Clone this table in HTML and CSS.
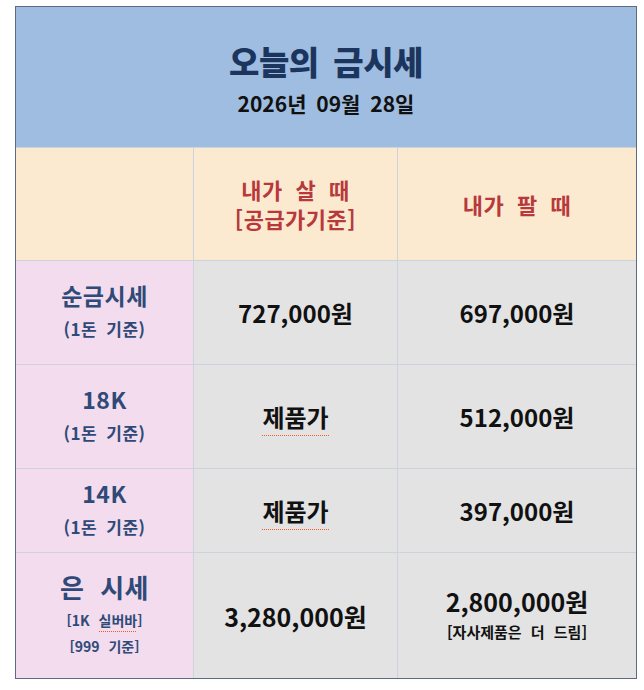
FILE: index.html
```html
<!DOCTYPE html>
<html lang="ko">
<head>
<meta charset="utf-8">
<link rel="stylesheet" href="styles.css">
</head>
<body>
<div class="sheet">
  <div class="cell head">
    <div class="title">오늘의 금시세</div>
    <div class="date">2026년 09월 28일</div>
  </div>

  <div class="cell colhead"></div>
  <div class="cell colhead"><div class="red">내가 살 때</div><div class="red">[공급가기준]</div></div>
  <div class="cell colhead"><div class="red">내가 팔 때</div></div>

  <div class="cell label"><div class="lbl">순금시세</div><div class="sub">(1돈 기준)</div></div>
  <div class="cell val"><div class="num">727,000원</div></div>
  <div class="cell val"><div class="num">697,000원</div></div>

  <div class="cell label"><div class="lbl">18K</div><div class="sub">(1돈 기준)</div></div>
  <div class="cell val"><div class="num"><span class="squiggle">제품가</span></div></div>
  <div class="cell val"><div class="num">512,000원</div></div>

  <div class="cell label"><div class="lbl">14K</div><div class="sub">(1돈 기준)</div></div>
  <div class="cell val"><div class="num"><span class="squiggle">제품가</span></div></div>
  <div class="cell val"><div class="num">397,000원</div></div>

  <div class="cell label"><div class="lbl big">은 시세</div><div class="small">[1K <span class="squiggle">실버바</span>]</div><div class="small">[999 기준]</div></div>
  <div class="cell val"><div class="num big">3,280,000원</div></div>
  <div class="cell val"><div class="num big">2,800,000원</div><div class="note">[자사제품은 더 드림]</div></div>
</div>
</body>
</html>
```

FILE: styles.css
```css
html, body {
  margin: 0;
  padding: 0;
  background: #ffffff;
}
body {
  font-family: "Noto Sans CJK KR", "Noto Sans", sans-serif;
}
.sheet {
  margin: 6px 0 0 15px;
  width: 620px;
  border: 1px solid #5d6b80;
  display: grid;
  grid-template-columns: 177px 203px 238px;
  grid-template-rows: 140px 112px 103px 103px 83px 125px;
  gap: 1px;
  background: #cdd3dc;
}
.cell {
  display: flex;
  flex-direction: column;
  align-items: center;
  justify-content: center;
  text-align: center;
}
.head {
  grid-column: 1 / 4;
  background: #9fbde0;
  padding-top: 4px;
}
.title {
  font-size: 33px;
  font-weight: 900;
  color: #1c355e;
  letter-spacing: -0.5px;
  word-spacing: 6px;
  line-height: 42px;
}
.date {
  font-size: 21px;
  font-weight: 700;
  color: #111111;
  line-height: 30px;
  margin-top: 6px;
  word-spacing: 4px;
}
.colhead {
  background: #fcead0;
}
.red {
  color: #b8393b;
  font-size: 22px;
  font-weight: 700;
  line-height: 29px;
  letter-spacing: 0.5px;
  word-spacing: 6px;
}
.label {
  background: #f2dcee;
  color: #2f4a78;
}
.lbl {
  font-size: 23px;
  font-weight: 700;
  line-height: 34px;
  letter-spacing: 0.5px;
  margin-bottom: 3px;
  margin-top: -4px;
}
.lbl.big {
  font-size: 26px;
  line-height: 36px;
  word-spacing: 8px;
  margin-top: -4px;
  margin-bottom: 2px;
}
.sub {
  font-size: 17px;
  font-weight: 700;
  line-height: 28px;
  letter-spacing: 0.5px;
  word-spacing: 4px;
}
.small {
  font-size: 14px;
  font-weight: 700;
  line-height: 26px;
  word-spacing: 5px;
}
.val {
  background: #e3e3e3;
  color: #111111;
}
.num {
  font-size: 24px;
  font-weight: 700;
  line-height: 32px;
}
.num.big {
  font-size: 25px;
}
.note {
  font-size: 15px;
  font-weight: 700;
  line-height: 30px;
  word-spacing: 5px;
}
.squiggle {
  padding-bottom: 2px;
  background-image: repeating-linear-gradient(to right, #f05a28 0 1px, transparent 1px 2px);
  background-repeat: no-repeat;
  background-position: left bottom;
  background-size: 100% 1px;
}
```
